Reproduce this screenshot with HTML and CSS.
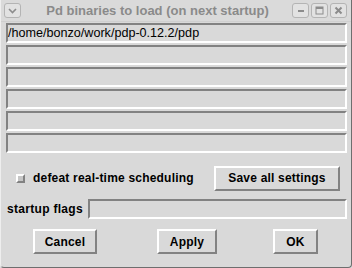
FILE: index.html
```html
<!DOCTYPE html>
<html lang="en">
<head>
    <meta charset="UTF-8">
    <title>Pd binaries to load (on next startup)</title>
    <link rel="stylesheet" href="styles.css">
</head>
<body>
    <div class="window">
        <div class="titlebar">
            <span class="tbtn menu">
                <svg width="9" height="6" viewBox="0 0 9 6"><path d="M1 1 L4.5 4.5 L8 1" fill="none" stroke="#8c8c8c" stroke-width="1.6"/></svg>
            </span>
            <span class="title">Pd binaries to load (on next startup)</span>
            <span class="tbtn">
                <svg width="8" height="8" viewBox="0 0 8 8"><rect x="1" y="3" width="6" height="2" fill="#8c8c8c"/></svg>
            </span>
            <span class="tbtn">
                <svg width="9" height="9" viewBox="0 0 9 9"><rect x="1" y="1" width="7" height="7" fill="none" stroke="#8c8c8c" stroke-width="1"/><rect x="1" y="1" width="7" height="2" fill="#8c8c8c"/></svg>
            </span>
            <span class="tbtn">
                <svg width="9" height="9" viewBox="0 0 9 9"><path d="M1.5 1.5 L7.5 7.5 M7.5 1.5 L1.5 7.5" stroke="#8c8c8c" stroke-width="2"/></svg>
            </span>
        </div>
        <div class="content">
            <div class="paths">
                <div class="entry">/home/bonzo/work/pdp-0.12.2/pdp</div>
                <div class="entry"></div>
                <div class="entry"></div>
                <div class="entry"></div>
                <div class="entry"></div>
                <div class="entry"></div>
            </div>
            <div class="row options">
                <label class="check"><span class="box"></span>defeat real-time scheduling</label>
                <button class="btn save">Save all settings</button>
            </div>
            <div class="row flags">
                <span class="label">startup flags</span>
                <div class="entry grow"></div>
            </div>
            <div class="row actions">
                <button class="btn cancel">Cancel</button>
                <button class="btn apply">Apply</button>
                <button class="btn ok">OK</button>
            </div>
        </div>
    </div>
</body>
</html>
```

FILE: styles.css
```css
body {
    margin: 0;
    padding: 0;
    background: #d9d9d9;
    font-family: "Liberation Sans", Arial, sans-serif;
}
.window {
    width: 352px;
    height: 268px;
    box-sizing: border-box;
    background: #d9d9d9;
    border-left: 1px solid #eeeeee;
    border-right: 1px solid #6e6e6e;
    border-bottom: 1px solid #6e6e6e;
    border-bottom-left-radius: 4px;
    border-bottom-right-radius: 4px;
    display: flex;
    flex-direction: column;
}
.titlebar {
    height: 22px;
    display: flex;
    align-items: center;
    padding: 0 4px 0 3px;
    background: #dadada;
    border-bottom: 1px solid #cfcfcf;
    box-sizing: border-box;
}
.title {
    flex: 1;
    text-align: center;
    font-weight: bold;
    font-size: 13px;
    color: #8a8a8a;
    padding-left: 4px;
}
.tbtn {
    width: 15px;
    height: 13px;
    border: 1px solid #b4b4b4;
    border-radius: 3px;
    background: #e2e2e2;
    display: flex;
    align-items: center;
    justify-content: center;
    margin-left: 2px;
}
.tbtn.menu {
    margin-left: 0;
}
.content {
    flex: 1;
    padding: 1px 4px 0 5px;
    display: flex;
    flex-direction: column;
}
.paths {
    display: flex;
    flex-direction: column;
    gap: 2px;
}
.entry {
    height: 20px;
    box-sizing: border-box;
    border-top: 2px solid #828282;
    border-left: 2px solid #828282;
    border-bottom: 2px solid #ffffff;
    border-right: 2px solid #ffffff;
    font-size: 12.6px;
    line-height: 16px;
    padding-left: 0;
    color: #000;
}
.row {
    display: flex;
    align-items: center;
}
.options {
    margin-top: 12px;
    height: 26px;
}
.check {
    display: flex;
    align-items: center;
    font-weight: bold;
    font-size: 12px;
    letter-spacing: 0.2px;
    margin-left: 10px;
    flex: 1;
}
.box {
    width: 9px;
    height: 9px;
    box-sizing: border-box;
    border-top: 2px solid #ffffff;
    border-left: 2px solid #ffffff;
    border-bottom: 2px solid #828282;
    border-right: 2px solid #828282;
    background: #c6c6c6;
    margin-right: 8px;
}
.btn {
    font-family: "Liberation Sans", Arial, sans-serif;
    font-weight: bold;
    font-size: 12px;
    letter-spacing: 0.2px;
    color: #000;
    background: #d9d9d9;
    height: 25px;
    box-sizing: border-box;
    border-top: 2px solid #ffffff;
    border-left: 2px solid #ffffff;
    border-bottom: 2px solid #828282;
    border-right: 2px solid #828282;
    padding: 0;
}
.save {
    width: 126px;
    margin-right: 7px;
}
.flags {
    margin-top: 8px;
}
.label {
    font-weight: bold;
    font-size: 12px;
    letter-spacing: 0.3px;
    margin: 0 5px 0 1px;
}
.grow {
    flex: 1;
}
.actions {
    margin-top: 10px;
}
.cancel {
    width: 64px;
    margin-left: 27px;
}
.apply {
    width: 60px;
    margin-left: 60px;
}
.ok {
    width: 45px;
    margin-left: 56px;
}
```
